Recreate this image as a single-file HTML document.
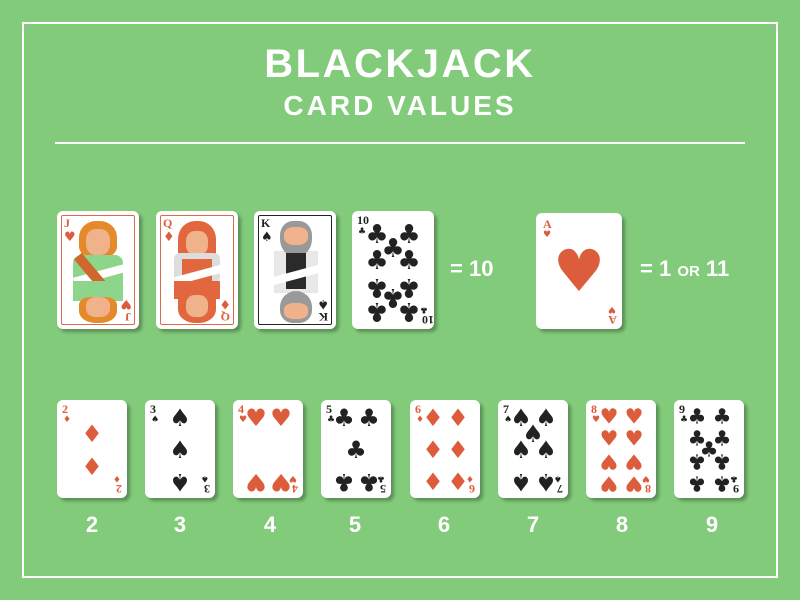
<!DOCTYPE html>
<html><head><meta charset="utf-8"><style>
*{margin:0;padding:0;box-sizing:border-box}
body{width:800px;height:600px;background:#82cb7b;position:relative;overflow:hidden;font-family:"Liberation Sans","DejaVu Sans",sans-serif}
.frame{position:absolute;left:22px;top:22px;width:756px;height:556px;border:2px solid #fff}
h1{position:absolute;left:0;width:800px;top:42px;text-align:center;color:#fff;font-size:40px;font-weight:900;letter-spacing:2.5px}
h2{position:absolute;left:0;width:800px;top:90px;text-align:center;color:#fff;font-size:28px;font-weight:700;letter-spacing:3px}
.line{position:absolute;left:55px;top:142px;width:690px;height:2px;background:#fff}
.c{position:absolute;background:#fff;border-radius:6px;box-shadow:3px 3px 3px rgba(0,0,0,.3);overflow:hidden}
.s{width:70px;height:98px;top:400px}
.p{position:absolute;transform:translate(-50%,-50%);font-family:"DejaVu Sans",sans-serif;font-size:24px;line-height:1}
.r{color:#dc5d3b}.k{color:#222}
.ix{position:absolute;left:5px;top:3px;font-family:"Liberation Serif",serif;font-weight:700;font-size:12px;line-height:1}
.is{position:absolute;left:6px;top:16px;font-family:"DejaVu Sans",sans-serif;font-size:9px;line-height:1}
.br{position:absolute;right:4px;bottom:3px;transform:rotate(180deg);width:12px;height:26px}
.br .ix{left:1px;top:0}.br .is{left:2px;top:13px}
.lab{position:absolute;top:512px;color:#fff;font-size:22px;font-weight:700;transform:translateX(-50%)}
.eq{position:absolute;color:#fff;font-weight:700;font-size:22px}
.f{width:82px;height:118px;top:211px}
.in{position:absolute;left:4px;top:4px;right:4px;bottom:4px;border:1.5px solid #dc6a4b;border-radius:2px}
.b{position:absolute}
</style></head><body>
<div class="frame"></div>
<h1>BLACKJACK</h1>
<h2>CARD VALUES</h2>
<div class="line"></div>

<!-- J -->
<div class="c f" style="left:57px">
 <div class="in"></div>
 <div class="b" style="left:22px;top:10px;width:38px;height:36px;background:#e58a2a;border-radius:45% 45% 30% 30%"></div>
 <div class="b" style="left:29px;top:18px;width:24px;height:26px;background:#f0b28a;border-radius:40%"></div>
 <div class="b" style="left:16px;top:44px;width:50px;height:32px;background:#8ed58c;border-radius:8px 8px 0 0"></div>
 <div class="b" style="left:16px;top:60px;width:52px;height:8px;background:#fff;transform:rotate(-15deg)"></div>
 <div class="b" style="left:30px;top:40px;width:10px;height:44px;background:#d0672c;transform:rotate(-40deg)"></div>
 <div class="b" style="left:16px;top:70px;width:50px;height:20px;background:#8ed58c"></div>
 <div class="b" style="left:22px;top:86px;width:38px;height:26px;background:#e58a2a;border-radius:30% 30% 45% 45%"></div>
 <div class="b" style="left:29px;top:86px;width:24px;height:20px;background:#f0b28a;border-radius:40%"></div>
 <div class="ix r" style="left:7px;top:6px">J</div><div class="is r" style="left:7px;top:20px;font-size:13px">♥</div>
 <div class="br" style="right:7px;bottom:6px"><div class="ix r">J</div><div class="is r" style="font-size:13px;left:0">♥</div></div>
</div>
<!-- Q -->
<div class="c f" style="left:156px">
 <div class="in"></div>
 <div class="b" style="left:22px;top:10px;width:38px;height:40px;background:#e2673f;border-radius:45% 45% 20% 20%"></div>
 <div class="b" style="left:30px;top:20px;width:22px;height:24px;background:#f0b28a;border-radius:40%"></div>
 <div class="b" style="left:18px;top:42px;width:46px;height:30px;background:#ddd;border-radius:6px"></div>
 <div class="b" style="left:26px;top:48px;width:30px;height:24px;background:#e2673f"></div>
 <div class="b" style="left:16px;top:60px;width:52px;height:8px;background:#fff;transform:rotate(-15deg)"></div>
 <div class="b" style="left:18px;top:70px;width:46px;height:18px;background:#e2673f"></div>
 <div class="b" style="left:22px;top:82px;width:38px;height:30px;background:#e2673f;border-radius:20% 20% 45% 45%"></div>
 <div class="b" style="left:30px;top:84px;width:22px;height:22px;background:#f0b28a;border-radius:40%"></div>
 <div class="ix r" style="left:7px;top:6px">Q</div><div class="is r" style="left:7px;top:20px;font-size:13px">♦</div>
 <div class="br" style="right:7px;bottom:6px"><div class="ix r">Q</div><div class="is r" style="font-size:13px;left:0">♦</div></div>
</div>
<!-- K -->
<div class="c f" style="left:254px">
 <div class="in" style="border-color:#222"></div>
 <div class="b" style="left:20px;top:40px;width:44px;height:42px;background:#e8e8e8"></div>
 <div class="b" style="left:26px;top:10px;width:32px;height:36px;background:#999;border-radius:40% 40% 50% 50%"></div>
 <div class="b" style="left:30px;top:16px;width:24px;height:18px;background:#f0b28a;border-radius:40%"></div>
 <div class="b" style="left:32px;top:42px;width:20px;height:36px;background:#2a2a2a"></div>
 <div class="b" style="left:16px;top:60px;width:52px;height:8px;background:#fff;transform:rotate(-15deg)"></div>
 <div class="b" style="left:26px;top:80px;width:32px;height:32px;background:#999;border-radius:50% 50% 40% 40%"></div>
 <div class="b" style="left:30px;top:92px;width:24px;height:16px;background:#f0b28a;border-radius:40%"></div>
 <div class="ix k" style="left:7px;top:6px">K</div><div class="is k" style="left:7px;top:20px;font-size:13px">♠</div>
 <div class="br" style="right:7px;bottom:6px"><div class="ix k">K</div><div class="is k" style="font-size:13px;left:0">♠</div></div>
</div>
<!-- 10 -->
<div class="c f" style="left:352px">
 <div class="ix k">10</div><div class="is k" style="top:17px">♣</div>
 <span class="p k" style="left:25px;top:24px;font-size:26px">♣</span><span class="p k" style="left:57px;top:24px;font-size:26px">♣</span>
 <span class="p k" style="left:41px;top:38px;font-size:26px">♣</span>
 <span class="p k" style="left:25px;top:50px;font-size:26px">♣</span><span class="p k" style="left:57px;top:50px;font-size:26px">♣</span>
 <span class="p k" style="left:25px;top:76px;font-size:26px;transform:translate(-50%,-50%) rotate(180deg)">♣</span><span class="p k" style="left:57px;top:76px;font-size:26px;transform:translate(-50%,-50%) rotate(180deg)">♣</span>
 <span class="p k" style="left:41px;top:86px;font-size:26px;transform:translate(-50%,-50%) rotate(180deg)">♣</span>
 <span class="p k" style="left:25px;top:100px;font-size:26px;transform:translate(-50%,-50%) rotate(180deg)">♣</span><span class="p k" style="left:57px;top:100px;font-size:26px;transform:translate(-50%,-50%) rotate(180deg)">♣</span>
 <div class="br"><div class="ix k" style="left:-4px">10</div><div class="is k">♣</div></div>
</div>
<div class="eq" style="left:450px;top:256px">= 10</div>

<!-- Ace -->
<div class="c" style="left:536px;top:213px;width:86px;height:116px">
 <div class="ix r" style="left:7px;top:5px">A</div><div class="is r" style="left:7px;top:18px">♥</div>
 <span class="p r" style="left:43px;top:58px;font-size:58px">♥</span>
 <div class="br"><div class="ix r">A</div><div class="is r">♥</div></div>
</div>
<div class="eq" style="left:640px;top:256px">= 1 <span style="font-size:15px">OR</span> 11</div>

<!-- small cards -->
<div class="c s" style="left:57px"><div class="ix r">2</div><div class="is r">♦</div>
 <span class="p r" style="left:35px;top:34px">♦</span><span class="p r" style="left:35px;top:67px">♦</span>
 <div class="br"><div class="ix r">2</div><div class="is r">♦</div></div></div>
<div class="c s" style="left:145px"><div class="ix k">3</div><div class="is k">♠</div>
 <span class="p k" style="left:35px;top:18px">♠</span><span class="p k" style="left:35px;top:50px">♠</span><span class="p k" style="left:35px;top:82px;transform:translate(-50%,-50%) rotate(180deg)">♠</span>
 <div class="br"><div class="ix k">3</div><div class="is k">♠</div></div></div>
<div class="c s" style="left:233px"><div class="ix r">4</div><div class="is r">♥</div>
 <span class="p r" style="left:23px;top:18px">♥</span><span class="p r" style="left:48px;top:18px">♥</span>
 <span class="p r" style="left:23px;top:82px;transform:translate(-50%,-50%) rotate(180deg)">♥</span><span class="p r" style="left:48px;top:82px;transform:translate(-50%,-50%) rotate(180deg)">♥</span>
 <div class="br"><div class="ix r">4</div><div class="is r">♥</div></div></div>
<div class="c s" style="left:321px"><div class="ix k">5</div><div class="is k">♣</div>
 <span class="p k" style="left:23px;top:18px">♣</span><span class="p k" style="left:48px;top:18px">♣</span><span class="p k" style="left:35px;top:50px">♣</span>
 <span class="p k" style="left:23px;top:82px;transform:translate(-50%,-50%) rotate(180deg)">♣</span><span class="p k" style="left:48px;top:82px;transform:translate(-50%,-50%) rotate(180deg)">♣</span>
 <div class="br"><div class="ix k">5</div><div class="is k">♣</div></div></div>
<div class="c s" style="left:410px"><div class="ix r">6</div><div class="is r">♦</div>
 <span class="p r" style="left:23px;top:18px">♦</span><span class="p r" style="left:48px;top:18px">♦</span>
 <span class="p r" style="left:23px;top:50px">♦</span><span class="p r" style="left:48px;top:50px">♦</span>
 <span class="p r" style="left:23px;top:82px">♦</span><span class="p r" style="left:48px;top:82px">♦</span>
 <div class="br"><div class="ix r">6</div><div class="is r">♦</div></div></div>
<div class="c s" style="left:498px"><div class="ix k">7</div><div class="is k">♠</div>
 <span class="p k" style="left:23px;top:18px">♠</span><span class="p k" style="left:48px;top:18px">♠</span><span class="p k" style="left:35px;top:34px">♠</span>
 <span class="p k" style="left:23px;top:50px">♠</span><span class="p k" style="left:48px;top:50px">♠</span>
 <span class="p k" style="left:23px;top:82px;transform:translate(-50%,-50%) rotate(180deg)">♠</span><span class="p k" style="left:48px;top:82px;transform:translate(-50%,-50%) rotate(180deg)">♠</span>
 <div class="br"><div class="ix k">7</div><div class="is k">♠</div></div></div>
<div class="c s" style="left:586px"><div class="ix r">8</div><div class="is r">♥</div>
 <span class="p r" style="left:23px;top:17px;font-size:21px">♥</span><span class="p r" style="left:48px;top:17px;font-size:21px">♥</span>
 <span class="p r" style="left:23px;top:39px;font-size:21px">♥</span><span class="p r" style="left:48px;top:39px;font-size:21px">♥</span>
 <span class="p r" style="left:23px;top:61px;font-size:21px;transform:translate(-50%,-50%) rotate(180deg)">♥</span><span class="p r" style="left:48px;top:61px;font-size:21px;transform:translate(-50%,-50%) rotate(180deg)">♥</span>
 <span class="p r" style="left:23px;top:83px;font-size:21px;transform:translate(-50%,-50%) rotate(180deg)">♥</span><span class="p r" style="left:48px;top:83px;font-size:21px;transform:translate(-50%,-50%) rotate(180deg)">♥</span>
 <div class="br"><div class="ix r">8</div><div class="is r">♥</div></div></div>
<div class="c s" style="left:674px"><div class="ix k">9</div><div class="is k">♣</div>
 <span class="p k" style="left:23px;top:17px;font-size:21px">♣</span><span class="p k" style="left:48px;top:17px;font-size:21px">♣</span>
 <span class="p k" style="left:23px;top:39px;font-size:21px">♣</span><span class="p k" style="left:48px;top:39px;font-size:21px">♣</span><span class="p k" style="left:35px;top:50px;font-size:21px">♣</span>
 <span class="p k" style="left:23px;top:61px;font-size:21px;transform:translate(-50%,-50%) rotate(180deg)">♣</span><span class="p k" style="left:48px;top:61px;font-size:21px;transform:translate(-50%,-50%) rotate(180deg)">♣</span>
 <span class="p k" style="left:23px;top:83px;font-size:21px;transform:translate(-50%,-50%) rotate(180deg)">♣</span><span class="p k" style="left:48px;top:83px;font-size:21px;transform:translate(-50%,-50%) rotate(180deg)">♣</span>
 <div class="br"><div class="ix k">9</div><div class="is k">♣</div></div></div>

<div class="lab" style="left:92px">2</div><div class="lab" style="left:180px">3</div>
<div class="lab" style="left:270px">4</div><div class="lab" style="left:355px">5</div>
<div class="lab" style="left:444px">6</div><div class="lab" style="left:533px">7</div>
<div class="lab" style="left:622px">8</div><div class="lab" style="left:712px">9</div>
</body></html>
